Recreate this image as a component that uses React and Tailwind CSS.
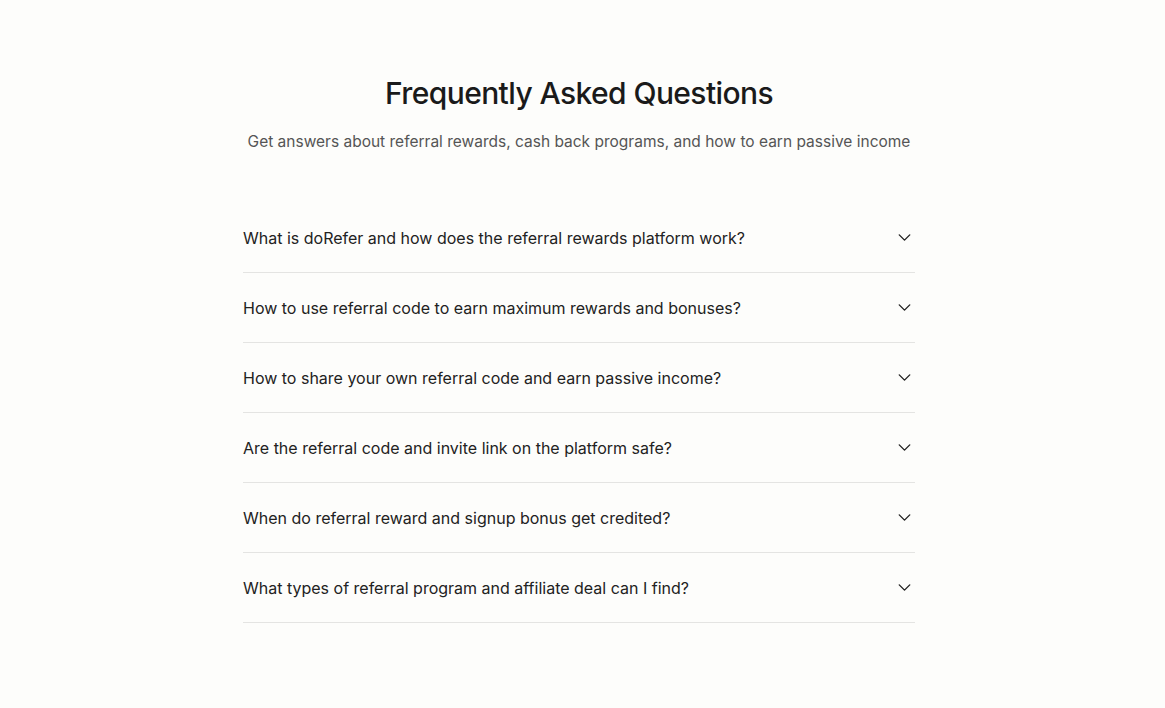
import React, { useState } from "react";

const questions = [
  "What is doRefer and how does the referral rewards platform work?",
  "How to use referral code to earn maximum rewards and bonuses?",
  "How to share your own referral code and earn passive income?",
  "Are the referral code and invite link on the platform safe?",
  "When do referral reward and signup bonus get credited?",
  "What types of referral program and affiliate deal can I find?",
];

function Chevron() {
  return (
    <svg width="21" height="21" viewBox="0 0 24 24" fill="none" stroke="#1f1f1f" strokeWidth="1.6" strokeLinecap="round" strokeLinejoin="round">
      <path d="m6 9 6 6 6-6" />
    </svg>
  );
}

export default function App() {
  const [open, setOpen] = useState(-1);
  return (
    <div
      className="min-h-[708px] w-full bg-[#fdfdfb] pr-[7px]"
      style={{ fontFamily: "Inter, 'Noto Sans', sans-serif" }}
    >
      <div className="mx-auto w-[672px] pt-[75px]">
        <h2 className="text-center text-[30px] leading-[36px] font-medium tracking-[-0.02em] text-[#1a1a1a]">
          Frequently Asked Questions
        </h2>
        <p className="mt-[19px] -mx-4 whitespace-nowrap text-center text-[15.5px] leading-[24px] text-[#555555]">
          Get answers about referral rewards, cash back programs, and how to earn passive income
        </p>
        <div className="mt-[49px]">
          {questions.map((q, i) => (
            <div key={i} className="border-b border-[#e4e4e2]">
              <button
                onClick={() => setOpen(open === i ? -1 : i)}
                className="flex h-[69px] w-full items-center justify-between text-left"
              >
                <span className="text-[16px] leading-[24px] text-[#222222]">{q}</span>
                <span className="flex">
                  <Chevron />
                </span>
              </button>
            </div>
          ))}
        </div>
      </div>
    </div>
  );
}
